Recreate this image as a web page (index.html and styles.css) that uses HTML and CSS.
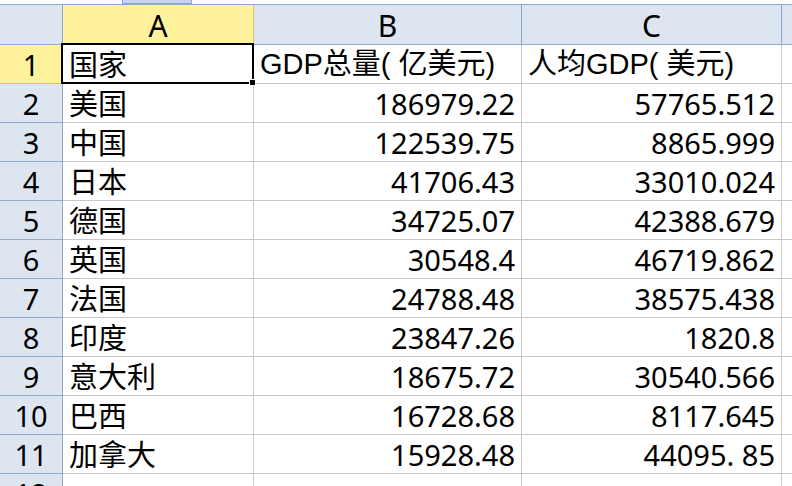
FILE: index.html
```html
<!DOCTYPE html>
<html lang="zh-CN">
<head>
<meta charset="utf-8">
<title>GDP</title>
<link rel="stylesheet" href="styles.css">
</head>
<body>
<div class="topbar"><div class="tab"></div></div>
<div class="sheet">
  <div class="corner"></div>
  <div class="colhead sel">A</div>
  <div class="colhead">B</div>
  <div class="colhead">C</div>
  <div class="colhead last"></div>

  <div class="rowhead sel">1</div>
  <div class="cell active">国家</div>
  <div class="cell latin">GDP总量( 亿美元)</div>
  <div class="cell latin">人均GDP( 美元)</div>
  <div class="cell last"></div>

  <div class="rowhead">2</div>
  <div class="cell">美国</div>
  <div class="cell num">186979.22</div>
  <div class="cell num">57765.512</div>
  <div class="cell last"></div>

  <div class="rowhead">3</div>
  <div class="cell">中国</div>
  <div class="cell num">122539.75</div>
  <div class="cell num">8865.999</div>
  <div class="cell last"></div>

  <div class="rowhead">4</div>
  <div class="cell">日本</div>
  <div class="cell num">41706.43</div>
  <div class="cell num">33010.024</div>
  <div class="cell last"></div>

  <div class="rowhead">5</div>
  <div class="cell">德国</div>
  <div class="cell num">34725.07</div>
  <div class="cell num">42388.679</div>
  <div class="cell last"></div>

  <div class="rowhead">6</div>
  <div class="cell">英国</div>
  <div class="cell num">30548.4</div>
  <div class="cell num">46719.862</div>
  <div class="cell last"></div>

  <div class="rowhead">7</div>
  <div class="cell">法国</div>
  <div class="cell num">24788.48</div>
  <div class="cell num">38575.438</div>
  <div class="cell last"></div>

  <div class="rowhead">8</div>
  <div class="cell">印度</div>
  <div class="cell num">23847.26</div>
  <div class="cell num">1820.8</div>
  <div class="cell last"></div>

  <div class="rowhead">9</div>
  <div class="cell">意大利</div>
  <div class="cell num">18675.72</div>
  <div class="cell num">30540.566</div>
  <div class="cell last"></div>

  <div class="rowhead">10</div>
  <div class="cell">巴西</div>
  <div class="cell num">16728.68</div>
  <div class="cell num">8117.645</div>
  <div class="cell last"></div>

  <div class="rowhead">11</div>
  <div class="cell">加拿大</div>
  <div class="cell num">15928.48</div>
  <div class="cell num">44095. 85</div>
  <div class="cell last"></div>

  <div class="rowhead">12</div>
  <div class="cell"></div>
  <div class="cell num"></div>
  <div class="cell num"></div>
  <div class="cell last"></div>
</div>
</body>
</html>
```

FILE: styles.css
```css
html, body {
  margin: 0;
  padding: 0;
  background: #ffffff;
  overflow: hidden;
}
body {
  width: 792px;
  height: 486px;
  font-family: "Noto Sans", "Noto Sans CJK SC", sans-serif;
  font-size: 29px;
  color: #000;
}
.topbar {
  height: 4px;
  background: #ffffff;
  display: flex;
  border-bottom: 1px solid #8fa8d0;
}
.tab {
  margin-left: 122px;
  width: 68px;
  height: 3px;
  background: #c6d5ec;
  border: 1px solid #8fa8d0;
  border-top: none;
}
.sheet {
  display: grid;
  grid-template-columns: 63px 191px 268px 260px 40px;
  grid-template-rows: 40px repeat(12, 39px);
}
.corner, .colhead {
  background: #dde5f0;
  border-right: 1px solid #8fa8d0;
  border-bottom: 1px solid #8fa8d0;
  box-sizing: border-box;
}
.colhead {
  display: flex;
  align-items: center;
  justify-content: center;
  line-height: 1;
  padding-top: 2px;
  font-size: 30px;
}
.colhead.sel, .rowhead.sel {
  background: #fff29c;
  border-color: #e3c660;
}
.rowhead {
  background: #dde5f0;
  border-right: 1px solid #8fa8d0;
  border-bottom: 1px solid #8fa8d0;
  box-sizing: border-box;
  display: flex;
  align-items: center;
  justify-content: center;
  line-height: 1;
}
.cell {
  border-right: 1px solid #c8c8c8;
  border-bottom: 1px solid #c8c8c8;
  box-sizing: border-box;
  display: flex;
  align-items: center;
  padding: 0 6px 0 6px;
  white-space: nowrap;
  line-height: 1;
}
.cell.latin {
  font-family: "Liberation Sans", "Noto Sans CJK SC", sans-serif;
}
.cell.num {
  justify-content: flex-end;
}
.cell.active {
  position: relative;
}
.cell.active::after {
  content: "";
  position: absolute;
  left: -2px;
  top: -2px;
  right: -1px;
  bottom: -1px;
  border: 2px solid #000;
}
.cell.active::before {
  content: "";
  position: absolute;
  right: -3px;
  bottom: -3px;
  width: 5px;
  height: 5px;
  background: #000;
  border: 1px solid #fff;
  z-index: 2;
}
```
